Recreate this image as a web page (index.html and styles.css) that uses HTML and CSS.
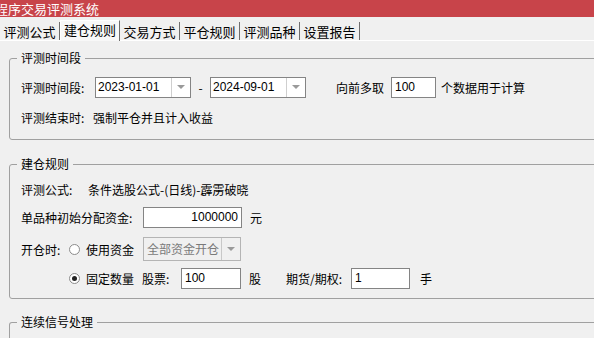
FILE: index.html
```html
<!DOCTYPE html>
<html lang="zh-CN">
<head>
    <meta charset="UTF-8">
    <meta name="viewport" content="width=device-width, initial-scale=1.0">
    <title>程序交易评测系统</title>
    <link rel="stylesheet" href="styles.css">
</head>
<body>
    <div class="titlebar">程序交易评测系统</div>

    <div class="tabs">
        <div class="tab">评测公式</div>
        <div class="tab active">建仓规则</div>
        <div class="tab">交易方式</div>
        <div class="tab">平仓规则</div>
        <div class="tab">评测品种</div>
        <div class="tab">设置报告</div>
    </div>

    <fieldset class="group first">
        <legend>评测时间段</legend>
        <div class="row">
            <span class="label w-period">评测时间段:</span>
            <div class="combo date">
                <span class="value">2023-01-01</span>
                <span class="drop"><i class="arrow"></i></span>
            </div>
            <span class="dash">-</span>
            <div class="combo date">
                <span class="value">2024-09-01</span>
                <span class="drop"><i class="arrow"></i></span>
            </div>
            <span class="label ahead">向前多取</span>
            <input class="edit count" type="text" value="100">
            <span class="unit-after">个数据用于计算</span>
        </div>
        <div class="row gap-8">
            <span class="label w-end">评测结束时:</span>
            <span>强制平仓并且计入收益</span>
        </div>
    </fieldset>

    <fieldset class="group second">
        <legend>建仓规则</legend>
        <div class="row">
            <span class="label w-formula">评测公式:</span>
            <span>条件选股公式-(日线)-霹雳破晓</span>
        </div>
        <div class="row gap-6">
            <span class="label w-fund">单品种初始分配资金:</span>
            <input class="edit money" type="text" value="1000000">
            <span class="unit">元</span>
        </div>
        <div class="row gap-10">
            <span class="label w-open">开仓时:</span>
            <span class="radio"></span>
            <span>使用资金</span>
            <div class="combo mode disabled">
                <span class="value">全部资金开仓</span>
                <span class="drop"><i class="arrow"></i></span>
            </div>
        </div>
        <div class="row gap-7 indent">
            <span class="radio checked"></span>
            <span>固定数量</span>
            <span class="label stock">股票:</span>
            <input class="edit qty" type="text" value="100">
            <span class="unit">股</span>
            <span class="label futures">期货/期权:</span>
            <input class="edit qty2" type="text" value="1">
            <span class="unit hand">手</span>
        </div>
    </fieldset>

    <fieldset class="group third">
        <legend>连续信号处理</legend>
    </fieldset>
</body>
</html>
```

FILE: styles.css
```css
body {
    margin: 0;
    background-color: #f0f0f0;
    font-family: "Noto Sans CJK SC", "Liberation Sans", sans-serif;
    font-size: 12px;
    color: #000;
    overflow: hidden;
    height: 338px;
}
.titlebar {
    height: 17px;
    line-height: 17px;
    background-color: #c8444a;
    color: #fff;
    font-size: 13px;
    text-indent: -5px;
    white-space: nowrap;
    overflow: hidden;
}
.tabs {
    display: flex;
    height: 23px;
    border-bottom: 1px solid #fff;
}
.tab {
    width: 59px;
    margin-top: 5px;
    height: 18px;
    line-height: 20px;
    font-size: 13px;
    text-align: center;
    border-right: 1px solid #6e6e6e;
    white-space: nowrap;
    overflow: hidden;
}
.tab.active {
    width: 60px;
    margin-top: 3px;
    height: 21px;
    line-height: 18px;
    background-color: #f8f8f8;
    border-left: 1px solid #fff;
    border-top: 1px solid #fff;
    box-sizing: border-box;
}

.group {
    border: 1px solid #a0a0a0;
    border-radius: 3px;
    margin: 0 -20px 0 9px;
    padding: 0 0 0 11px;
    min-width: 0;
}
.group legend {
    padding: 0 4px;
    margin-left: -4px;
    line-height: 14px;
}
.group.first {
    margin-top: 10px;
    padding-top: 11px;
    padding-bottom: 11px;
}
.group.second {
    margin-top: 17px;
    padding-top: 7px;
    padding-bottom: 9px;
}
.group.third {
    margin-top: 16px;
    height: 24px;
    border-bottom: none;
    border-radius: 3px 0 0 0;
}

.row {
    display: flex;
    align-items: center;
    height: 22px;
    white-space: nowrap;
}
.gap-6 { margin-top: 6px; }
.gap-7 { margin-top: 7px; }
.gap-8 { margin-top: 8px; }
.gap-10 { margin-top: 10px; }
.indent { padding-left: 48px; }

.label { display: inline-block; }
.w-period { width: 74px; }
.w-end { width: 72px; }
.w-formula { width: 67px; }
.w-fund { width: 122px; }
.w-open { width: 48px; }
.ahead { margin-left: 30px; width: 55px; }
.stock { margin-left: 8px; width: 39px; }
.futures { margin-left: 25px; width: 65px; }

.dash {
    width: 19px;
    text-align: center;
}
.unit { margin-left: 8px; }
.unit.hand { margin-left: 10px; }
.unit-after { margin-left: 5px; }

.combo {
    display: flex;
    box-sizing: border-box;
    height: 21px;
    border: 1px solid #848484;
    background-color: #fff;
}
.combo .value {
    flex: 1;
    padding-left: 2px;
    line-height: 19px;
    font-family: "Liberation Sans", sans-serif;
    font-size: 12px;
}
.combo .drop {
    width: 18px;
    border-left: 1px solid #cfcfcf;
    display: flex;
    align-items: center;
    justify-content: center;
}
.arrow {
    width: 0;
    height: 0;
    border-left: 4px solid transparent;
    border-right: 4px solid transparent;
    border-top: 4px solid #9a9a9a;
}
.combo.date { width: 96px; }
.combo.mode {
    width: 98px;
    height: 24px;
    margin-left: 9px;
}
.combo.disabled {
    background-color: #f0f0f0;
    border-color: #b4b4b4;
}
.combo.disabled .value {
    font-family: "Noto Sans CJK SC", sans-serif;
    color: #7a7a7a;
    line-height: 22px;
    padding-left: 3px;
}
.combo.disabled .drop {
    border-left-color: #c8c8c8;
}

.edit {
    box-sizing: border-box;
    height: 21px;
    border: 1px solid #848484;
    background-color: #fff;
    padding: 0 3px;
    font-family: "Liberation Sans", sans-serif;
    font-size: 12px;
    color: #000;
    margin: 0;
    outline: none;
}
.edit.count { width: 45px; }
.edit.money { width: 99px; text-align: right; }
.edit.qty { width: 60px; }
.edit.qty2 { width: 59px; }

.radio {
    display: inline-block;
    box-sizing: border-box;
    width: 11px;
    height: 11px;
    border: 1px solid #8c8c8c;
    border-radius: 50%;
    background-color: #fff;
    margin: 0 6px 0 0;
    position: relative;
}
.radio.checked::after {
    content: "";
    position: absolute;
    left: 2px;
    top: 2px;
    width: 5px;
    height: 5px;
    border-radius: 50%;
    background-color: #222;
}
```
